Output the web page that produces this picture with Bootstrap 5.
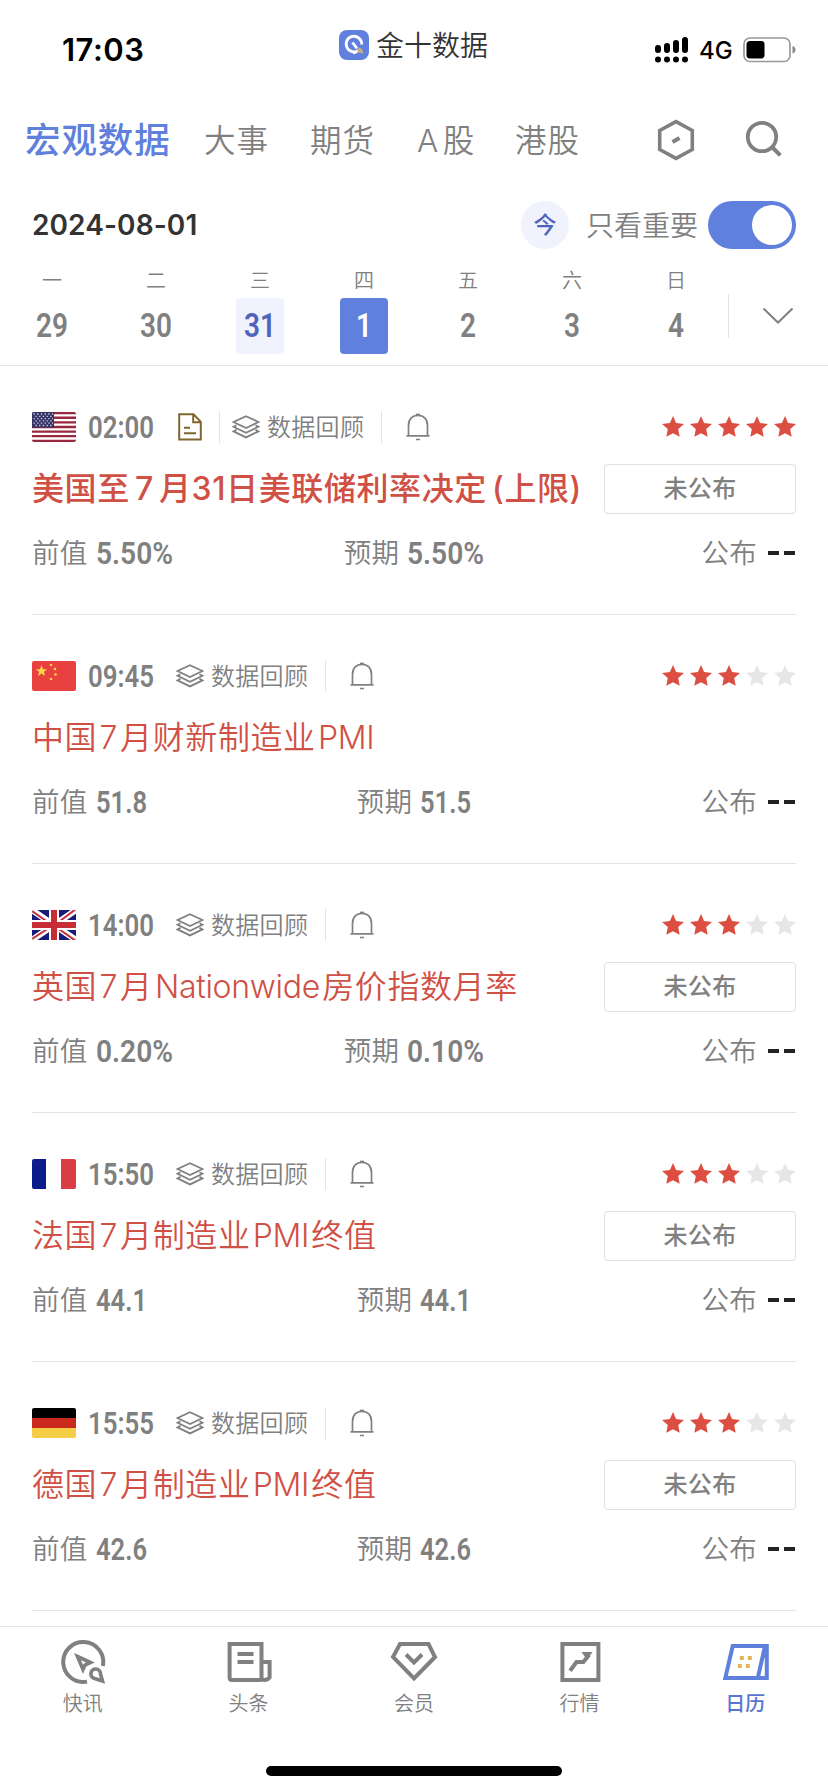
<!DOCTYPE html>
<html lang="zh-CN">
<head>
<meta charset="utf-8">
<meta name="viewport" content="width=device-width, initial-scale=1">
<title>金十数据</title>
<link href="https://cdn.jsdelivr.net/npm/bootstrap@5.3.0/dist/css/bootstrap.min.css" rel="stylesheet">
<style>
:root{--blue:#6080dd;--ink:#333;--grey:#808080;--red:#d05045;--line:#e5e5e5}
body{width:828px;height:1792px;overflow:hidden;background:#fff;color:var(--grey);font-family:Inter,"Noto Sans CJK SC",sans-serif;font-weight:350;line-height:1}
svg{display:block;flex:none}
.fit{font-family:Roboto,"Noto Sans CJK SC",sans-serif;font-weight:600;overflow:visible;fill:currentColor}
.cn{white-space:nowrap;flex:none}
.status{height:100px;color:#000}
.clock{width:277px;padding-left:62px;font-size:31px;font-weight:600;padding-top:34px;letter-spacing:.5px}
.brand{padding-top:30px;color:var(--ink);width:309px;padding-left:62px;font-size:28px}
.tabs{height:80px;padding-left:25px}
.tabs .cn{font-size:31.5px;letter-spacing:.9px;word-spacing:-6px;padding-top:2px}
.tabs .current{font-size:35.5px;letter-spacing:.9px;font-weight:500;color:var(--blue)}
.daybar{height:90px;padding:0 32px}
.date{font-size:28px;font-weight:600;color:var(--ink);letter-spacing:.1px}
.today{width:48px;height:48px;background:#f0f3fe;color:#4f63bb;font-size:23px;font-weight:500}
.toggle{width:88px;height:48px;background:var(--blue);padding:4px}
.toggle i{width:40px;height:40px;background:#fff}
.week{height:96px;border-bottom:1px solid var(--line)}
.day{width:104px}
.wd{font-size:20px;height:20px;margin-bottom:8px;padding-top:1px}
.num{width:48px;height:56px;border-radius:4px}
.past{background:#f0f3fe;color:#4f63bb}
.sel{background:var(--blue);color:#fff}
.vline{width:1px;background:#e3e3e3;flex:none}
.item{height:249px;margin:0 32px;border-bottom:1px solid var(--line);padding-top:45px}
.head{height:32px}
.flag{border-radius:2px}
.review{font-size:24px;letter-spacing:.3px;padding-top:2px}
.mid{height:50px;margin-top:21px}
.ttl{font-size:32px;color:var(--red);letter-spacing:.6px;word-spacing:-7.400px}
.ttl.key{font-weight:500;word-spacing:-4px}
.lat{letter-spacing:-.3px}
.pub{width:192px;height:50px;border:1px solid #dfdfdf;border-radius:4px;font-size:24px;font-weight:500;letter-spacing:.3px}
.vals{height:34px;margin-top:22px;font-size:27.5px}
.vals>div{flex:1 1 0}
.vals .cn{padding-top:2px;letter-spacing:.3px}
.dash{width:11px;height:3.5px;background:#222}
.dock{height:166px;border-top:1px solid var(--line);margin-top:15px;padding-top:13px}
.dock .col{font-size:20px}
.dock .on{color:#5a74d2;font-weight:500}
.cap{margin-top:10px}
.homebar{width:296px;height:10px;background:#000;margin-top:52px}
</style>
</head>
<body>
<svg width="0" height="0" class="position-absolute">
  <symbol id="layers" viewBox="0 0 28 24"><g fill="none" stroke="#808080" stroke-width="1.8"><path d="M14 1.2 26.5 7 14 13 1.5 7Z"/><path d="M4.500 10.200 1.500 11.700 14 17.700 26.500 11.700 23.500 10.200M4.500 14.900 1.500 16.400 14 22.400 26.500 16.400 23.500 14.900"/></g></symbol>
  <symbol id="bell" viewBox="0 0 24 28"><g fill="none" stroke="#808080" stroke-width="1.7"><path d="M.5 22.800H23.500M2.500 22.500V12.500C2.500 6 6.500 2.300 12 2.300S21.500 6 21.500 12.500V22.500M10 26.500H14"/><path d="M10 1.500H14"/></g></symbol>
  <symbol id="star" viewBox="0 0 22 22"><path d="M11 0 14.100 6.900 22 7.900 16.200 13.100 17.700 20.800 11 17.200 4.300 20.800 5.800 13.100 0 7.900 7.900 6.900Z"/></symbol>
  <symbol id="doc" viewBox="0 0 24 28"><g fill="none" stroke="#80652f" stroke-width="2"><path d="M1.200 1.200H15.500L22.800 8.800V26.500H1.200ZM15.200 1.500V9.200H22.500M6 14.700H12M6 20.300H18"/></g></symbol>
  <symbol id="us" viewBox="0 0 44 30"><path fill="#fff" d="M0 0H44V30H0Z"/><path stroke="#97283e" stroke-width="2.300" d="M0 1.150H44M0 5.770H44M0 10.380H44M0 15H44M0 19.600H44M0 24.200H44M0 28.850H44"/><path fill="#343465" d="M0 0H22V15.500H0Z"/><path stroke="#d4d6ea" stroke-width="1.300" stroke-dasharray="1.300 2.400" d="M1.500 2H21M3.400 4.300H21M1.500 6.600H21M3.400 8.900H21M1.500 11.200H21M3.400 13.500H21"/></symbol>
  <symbol id="cn" viewBox="0 0 44 30"><path fill="#e8413f" d="M0 0H44V30H0Z"/><g fill="#fbd54a"><path d="M9.500 4 11 8.200H15.200L11.900 10.800 13 15 9.500 12.400 6 15 7.100 10.800 3.800 8.200H8Z"/><circle cx="19" cy="4" r="1.300"/><circle cx="23" cy="8" r="1.300"/><circle cx="23.500" cy="13.500" r="1.300"/><circle cx="19" cy="18" r="1.300"/></g></symbol>
  <symbol id="gb" viewBox="0 0 44 30"><path fill="#161c77" d="M0 0H44V30H0Z"/><path stroke="#fff" stroke-width="6" d="M0 0 44 30M44 0 0 30"/><path stroke="#c62d36" stroke-width="2" d="M0 1 20 15M24 17 44 31M44-1 24 14M20 16 0 29"/><path stroke="#fff" stroke-width="10" d="M22 0V30M0 15H44"/><path stroke="#c62d36" stroke-width="6" d="M22 0V30M0 15H44"/></symbol>
  <symbol id="fr" viewBox="0 0 44 30"><path fill="#0c1c8a" d="M0 0H14V30H0Z"/><path fill="#d93f42" d="M29 0H44V30H29Z"/></symbol>
  <symbol id="de" viewBox="0 0 44 30"><path d="M0 0H44V10H0Z"/><path fill="#ca2a1d" d="M0 10H44V20H0Z"/><path fill="#f4ce46" d="M0 20H44V30H0Z"/></symbol>
</svg>

<header class="status d-flex">
  <div class="clock">17:03</div>
  <div class="brand d-flex">
    <svg width="30" height="30" viewBox="0 0 30 30"><rect width="30" height="30" rx="8" fill="#617fdc"/><path d="M20.500 19.500A7.800 7.800 0 1 1 22.700 14.500M13.500 12.500 18 18.500M17 22.300 14 23" fill="none" stroke="#fff" stroke-width="2.800"/><path d="M18 19.500 21 17.500 23.500 20 24 23.500 19 22.500Z" fill="#c8ae83"/></svg>
    <span class="cn" style="margin:2px 0 0 7px">金十数据</span>
  </div>
  <div class="d-flex" style="padding-left:69px;padding-top:36px">
    <svg width="33" height="28" viewBox="0 0 33 28"><path d="M3 12V14M12 10V14M21 7V14M30 4V14M3 23.400V23.600M12 23.400V23.600M21 23.400V23.600M30 23.400V23.600" stroke="#000" stroke-width="6" stroke-linecap="round"/></svg>
    <span class="cn" style="font-size:24px;font-weight:500;margin:3px 9px 0 11px">4G</span>
    <svg width="54" height="28" viewBox="0 0 54 28"><rect x="2" y="2" width="46" height="23.500" rx="6" fill="none" stroke="#999" stroke-width="1.700"/><rect x="4.500" y="5" width="18" height="17.500" rx="3.500"/><path d="M50.500 10Q53.500 11 53.500 13.700T50.500 17.500Z" fill="#888"/></svg>
  </div>
</header>

<nav class="tabs d-flex align-items-center">
  <span class="cn current" style="width:179px">宏观数据</span>
  <span class="cn" style="width:106px">大事</span>
  <span class="cn" style="width:107px">期货</span>
  <span class="cn" style="width:98px">A 股</span>
  <span class="cn" style="width:142px">港股</span>
  <svg width="38" height="42" viewBox="0 0 38 42"><path d="M19 2.600 35.300 11.500V30.500L19 39.400 2.700 30.500V11.500Z" fill="none" stroke="#808080" stroke-width="3.600"/><path d="M15.500 23 22.500 19" stroke="#808080" stroke-width="4"/></svg>
  <svg width="38" height="38" viewBox="0 0 38 38" style="margin:0 0 2px 50px"><circle cx="17" cy="17" r="14.200" fill="none" stroke="#808080" stroke-width="3.800"/><path d="M26.500 26.500 35.300 35.300" stroke="#808080" stroke-width="4"/></svg>
</nav>

<section class="daybar d-flex align-items-center">
  <span class="date">2024-08-01</span>
  <span class="today rounded-circle d-flex align-items-center justify-content-center ms-auto">今</span>
  <span class="cn" style="font-size:28px;margin:2px 10px 0 17px">只看重要</span>
  <span class="toggle rounded-pill d-flex justify-content-end"><i class="rounded-circle"></i></span>
</section>

<section class="week d-flex">
  <div id="days" class="d-flex"></div>
  <div class="vline" style="height:44px;margin-top:24px"></div>
  <svg width="32" height="18" viewBox="0 0 32 18" style="margin:37px 0 0 33px"><path d="M1.500 1.500 16 15.500 30.500 1.500" fill="none" stroke="#808080" stroke-width="2"/></svg>
</section>

<main id="list"></main>

<nav class="dock">
  <div class="row g-0 text-center">
    <div class="col"><svg class="mx-auto" width="48" height="44" viewBox="0 0 48 44"><g fill="none" stroke="#808080" stroke-width="4"><path d="M43.800 26A20 20 0 1 0 28 41.600"/><path stroke-width="3.600" d="M18.500 16.500 31.500 22.500 26 25 24 29.500Z"/><path stroke-width="3.600" d="M43.500 41 41.500 34A4.800 4.800 0 1 0 35.500 38.500Z"/></g></svg><div class="cap">快讯</div></div>
    <div class="col"><svg class="mx-auto" width="48" height="44" viewBox="0 0 48 44"><g fill="none" stroke="#808080" stroke-width="4"><path d="M37.500 40H8Q5.600 40 5.600 37.500V4H37.500V37Q37.500 40 40.500 40T45.600 37.500V22H37.500M13.500 14H29.500M13.500 22H29.500"/></g></svg><div class="cap">头条</div></div>
    <div class="col"><svg class="mx-auto" width="48" height="44" viewBox="0 0 48 44"><g fill="none" stroke="#808080" stroke-width="4"><path d="M10 4H38.500L45 17 24 38.500 3 17Z"/><path d="M16 14.500 24 22.500 32 14.500"/></g></svg><div class="cap">会员</div></div>
    <div class="col"><svg class="mx-auto" width="48" height="44" viewBox="0 0 48 44"><path d="M6.400 4H42.400V40H6.400ZM14.100 30.700 20.500 22H27.400L33 15" fill="none" stroke="#808080" stroke-width="4"/><path d="M25.500 12H36.500L31 20Z" fill="#808080"/></svg><div class="cap">行情</div></div>
    <div class="col on"><svg class="mx-auto" width="48" height="44" viewBox="0 0 48 44"><path d="M11.700 6H45.800V38H4.300ZM44 6 36.800 38" fill="none" stroke="#6080dd" stroke-width="4"/><path d="M42 5H47V18H43Z" fill="#6080dd"/><path d="M18.800 16h4v4h-4zM26.800 16h4v4h-4zM16.800 24h4v4h-4zM24.800 24h4v4h-4z" fill="#e2b558"/></svg><div class="cap">日历</div></div>
  </div>
  <div class="homebar rounded-pill mx-auto"></div>
</nav>

<script src="https://cdn.jsdelivr.net/npm/bootstrap@5.3.0/dist/js/bootstrap.bundle.min.js"></script>
<script>
// condensed figures: text squeezed to a fixed width
const fig = (t, w, s = 31) => `<svg class="fit" width="${w}" height="24"><text x="0" y="23" font-size="${s}" textLength="${w}" lengthAdjust="spacingAndGlyphs">${t}</text></svg>`;
document.getElementById('days').innerHTML = [['一','29'],['二','30'],['三','31','past'],['四','1','sel'],['五','2'],['六','3'],['日','4']]
  .map(([w, n, c = '']) => `<div class="day d-flex flex-column align-items-center"><div class="wd">${w}</div><div class="num ${c} d-flex align-items-center justify-content-center">${fig(n, n.length * 16, 33)}</div></div>`).join('');
const rows = [
  ['us','02:00',66,'美国至 7 月31日美联储利率决定 (上限)','5.50%','5.50%',77,5,1],
  ['cn','09:45',66,'中国 7 月财新制造业 PMI','51.8','51.5',51,3,0],
  ['gb','14:00',66,'英国 7 月 Nationwide 房价指数月率','0.20%','0.10%',77,3,1],
  ['fr','15:50',66,'法国 7 月制造业 PMI 终值','44.1','44.1',51,3,1],
  ['de','15:55',66,'德国 7 月制造业 PMI 终值','42.6','42.6',51,3,1]];
const use = (id, w, h, x = '') => `<svg width="${w}" height="${h}" ${x}><use href="#${id}"/></svg>`;
document.getElementById('list').innerHTML = rows.map(([f, t, tw, title, a, b, w, s, p], i) => `
<article class="item">
  <div class="head d-flex align-items-center">
    ${use(f, 44, 30, 'class="flag"')}<span style="margin:0 22px 0 12px">${fig(t, tw)}</span>
    ${i ? '' : use('doc', 24, 28, 'style="margin-left:2px"') + '<span class="vline" style="height:32px;margin:0 12px 0 17px"></span>'}
    ${use('layers', 28, 24)}<span class="cn review" style="margin-left:7px;width:114px">数据回顾</span>
    <span class="vline" style="height:32px;margin-right:24px"></span>${use('bell', 24, 28)}
    <span class="d-flex ms-auto" style="gap:6px">${[0,1,2,3,4].map(k => use('star', 22, 22, `fill="${k < s ? '#dc4e41' : '#e6e6e6'}"`)).join('')}</span>
  </div>
  <div class="mid d-flex align-items-center">
    <span class="cn ttl ${i ? '' : 'key'}">${title.replace(/[A-Za-z]+/g, '<span class="lat">$&</span>')}</span>
    ${p ? '<span class="pub d-flex align-items-center justify-content-center ms-auto">未公布</span>' : ''}
  </div>
  <div class="vals d-flex">
    <div class="d-flex align-items-center"><span class="cn me-2">前值</span>${fig(a, w)}</div>
    <div class="d-flex align-items-center justify-content-center"><span class="cn me-2">预期</span>${fig(b, w)}</div>
    <div class="d-flex align-items-center justify-content-end"><span class="cn">公布</span><i class="dash" style="margin:0 5px 0 11px"></i><i class="dash" style="margin-right:1px"></i></div>
  </div>
</article>`).join('');
</script>
</body>
</html>
